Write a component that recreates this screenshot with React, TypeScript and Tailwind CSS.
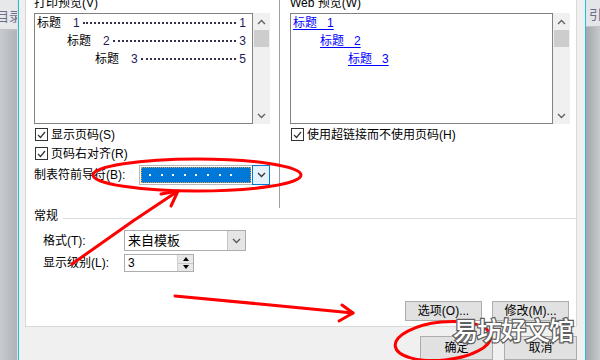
import React from 'react'

const ui = "font-['Liberation_Sans','Noto_Sans_CJK_SC',sans-serif]"

function Chevron({ dir, color = '#606060' }: { dir: 'up' | 'down'; color?: string }) {
  return (
    <svg width="9" height="6" viewBox="0 0 9 6">
      <polyline
        points={dir === 'up' ? '1,5 4.5,1.5 8,5' : '1,1 4.5,4.5 8,1'}
        fill="none"
        stroke={color}
        strokeWidth="1.3"
      />
    </svg>
  )
}

function ScrollBar() {
  return (
    <div className="w-[17px] h-full bg-[#f0f0f0] flex flex-col">
      <div className="h-[17px] flex items-center justify-center">
        <Chevron dir="up" />
      </div>
      <div className="h-[17px] mx-[1px] bg-[#cdcdcd]" />
      <div className="flex-1" />
      <div className="h-[17px] flex items-center justify-center">
        <Chevron dir="down" />
      </div>
    </div>
  )
}

function CheckBox() {
  return (
    <span className="w-[13px] h-[13px] border border-[#333] bg-white flex items-center justify-center shrink-0">
      <svg width="9" height="8" viewBox="0 0 9 8">
        <polyline points="1,4 3.5,6.5 8,1" fill="none" stroke="#333" strokeWidth="1.2" />
      </svg>
    </span>
  )
}

function CheckRow({ label }: { label: string }) {
  return (
    <div className="flex items-center h-[19px]">
      <span className="ml-[1px]">
        <CheckBox />
      </span>
      <span className="ml-[3px] whitespace-nowrap">{label}</span>
    </div>
  )
}

function TocRow({ indent, n, page }: { indent: string; n: string; page: string }) {
  return (
    <div className={`flex items-center h-[18px] pr-[6px] ${indent}`}>
      <span>标题</span>
      <span className="ml-[12px] text-[#1c1c58]">{n}</span>
      <span className="flex-1 mx-[3px] border-b-2 border-dotted border-[#3a2f48]" />
      <span className="text-[#1c1c58]">{page}</span>
    </div>
  )
}

function WebRow({ indent, n }: { indent: string; n: string }) {
  return (
    <div className={`flex items-center h-[18px] ${indent}`}>
      <span className="text-[#0000ff] underline underline-offset-2 whitespace-pre">{`标题   ${n}`}</span>
    </div>
  )
}

function Button({ children, w }: { children: React.ReactNode; w: string }) {
  return (
    <div className={`${w} h-full bg-[#e1e1e1] border border-[#adadad] flex items-center justify-center whitespace-nowrap`}>
      {children}
    </div>
  )
}

export default function App() {
  return (
    <div className={`relative w-[600px] h-[360px] overflow-hidden flex bg-[#f0f0f0] text-[12px] text-black ${ui}`}>
      {/* left neighbouring pane */}
      <div className="w-[18px] h-full flex flex-col bg-gradient-to-r from-[#c8ccd1] to-[#afb3b8] border-r border-[#dfe2e5] overflow-hidden">
        <div className="h-[30px] bg-[#e7e8ea] border-b border-[#c0c2c6] flex items-center pt-[4px]">
          <span className="-ml-[4px] whitespace-nowrap text-[13px] text-[#6c6c8c]">目录</span>
        </div>
      </div>
      <div className="w-px h-full bg-[#1cc2d2]" />

      {/* dialog */}
      <div className="w-[566px] h-full flex flex-col">
        <div className="h-[329px] ml-[6px] mr-[8px] bg-white border-x border-b border-[#d9d9d9] flex flex-col overflow-hidden">
          <div className="h-[208px] flex">
            {/* print preview */}
            <div className="w-[253px] pl-[8px] flex flex-col">
              <div className="h-[13px] overflow-hidden">
                <div className="leading-[12px] -mt-[3px] whitespace-nowrap">打印预览(V)</div>
              </div>
              <div className="flex h-[111px] w-[236px]">
                <div className="w-[219px] h-full border border-[#828282] bg-white leading-[18px]">
                  <TocRow indent="pl-[2px]" n="1" page="1" />
                  <TocRow indent="pl-[32px]" n="2" page="3" />
                  <TocRow indent="pl-[60px]" n="3" page="5" />
                </div>
                <ScrollBar />
              </div>
              <div className="mt-[1px]">
                <CheckRow label="显示页码(S)" />
                <CheckRow label="页码右对齐(R)" />
              </div>
              <div className="mt-[2px] h-[20px] flex items-center">
                <span className="w-[105px] whitespace-nowrap">制表符前导符(B):</span>
                <div className="w-[131px] h-[20px] flex">
                  <div className="flex-1 border border-[#b8b8b8] border-r-0 p-[1px]">
                    <div className="w-full h-full bg-[#0078d7] border border-dotted border-[#d89a50] flex items-center pl-[7px] gap-[9.6px]">
                      {Array.from({ length: 8 }).map((_, i) => (
                        <span key={i} className="w-[2px] h-[2px] bg-white" />
                      ))}
                    </div>
                  </div>
                  <div className="w-[18px] h-full border border-[#0078d7] bg-[#e5f1fb] flex items-center justify-center">
                    <Chevron dir="down" color="#333" />
                  </div>
                </div>
              </div>
            </div>

            {/* web preview */}
            <div className="flex-1 border-l border-[#a0a0a0] pl-[10px] pr-[6px] flex flex-col">
              <div className="h-[13px] overflow-hidden">
                <div className="leading-[12px] -mt-[3px] whitespace-nowrap">Web 预览(W)</div>
              </div>
              <div className="flex h-[111px]">
                <div className="flex-1 h-full border border-[#828282] bg-white leading-[18px]">
                  <WebRow indent="pl-[2px]" n="1" />
                  <WebRow indent="pl-[29px]" n="2" />
                  <WebRow indent="pl-[57px]" n="3" />
                </div>
                <ScrollBar />
              </div>
              <div className="mt-[1px]">
                <CheckRow label="使用超链接而不使用页码(H)" />
              </div>
            </div>
          </div>

          {/* general */}
          <div className="h-[16px] flex items-center pl-[8px]">
            <span>常规</span>
            <div className="flex-1 h-px bg-[#dcdcdc] ml-[5px] mt-[4px]" />
          </div>
          <div className="mt-[6px] h-[21px] flex items-center pl-[17px]">
            <span className="w-[81px] whitespace-nowrap">格式(T):</span>
            <div className="w-[122px] h-full border border-[#adadad] flex">
              <div className="flex-1 pl-[3px] text-[13px] leading-[19px]">来自模板</div>
              <div className="w-[18px] h-full bg-[#e5e5e5] border-l border-[#c4c4c4] flex items-center justify-center">
                <Chevron dir="down" color="#555" />
              </div>
            </div>
          </div>
          <div className="mt-[3px] h-[18px] flex items-center pl-[17px]">
            <span className="w-[81px] whitespace-nowrap">显示级别(L):</span>
            <div className="w-[70px] h-full border border-[#adadad] flex">
              <div className="flex-1 pl-[3px] leading-[16px]">3</div>
              <div className="w-[16px] h-full flex flex-col border-l border-[#d0d0d0]">
                <div className="flex-1 bg-[#e8e8e8] border-b border-[#c8c8c8] flex items-center justify-center">
                  <span className="w-0 h-0 border-x-[3.5px] border-x-transparent border-b-[4px] border-b-black" />
                </div>
                <div className="flex-1 bg-[#e8e8e8] flex items-center justify-center">
                  <span className="w-0 h-0 border-x-[3.5px] border-x-transparent border-t-[4px] border-t-black" />
                </div>
              </div>
            </div>
          </div>
          <div className="mt-[29px] h-[20px] flex justify-end gap-[10px] pr-[7px]">
            <Button w="w-[77px]">选项(O)...</Button>
            <Button w="w-[77px]">修改(M)...</Button>
          </div>
        </div>

        <div className="mt-[9px] h-[24px] flex justify-end gap-[11px] pr-[8px]">
          <Button w="w-[73px]">确定</Button>
          <Button w="w-[73px]">取消</Button>
        </div>
      </div>

      {/* right neighbouring pane */}
      <div className="w-px h-full bg-[#1cc2d2]" />
      <div className="w-[14px] h-full flex flex-col bg-gradient-to-r from-[#a3a7ac] to-[#c6cacd] overflow-hidden">
        <div className="h-[27px] bg-[#e4e5e8] border-b border-[#c0c2c6] flex items-center pt-[4px]">
          <span className="ml-[3px] whitespace-nowrap text-[13px] text-[#6c6c8c]">引</span>
        </div>
      </div>

      {/* red annotations */}
      <svg className="absolute inset-0 pointer-events-none" width="600" height="360" viewBox="0 0 600 360">
        <g fill="none" stroke="#ff0000" strokeWidth="3" strokeLinecap="round" strokeLinejoin="round">
          <ellipse cx="197" cy="175" rx="104" ry="16" />
          <polyline points="72,264 133,221 178,191" />
          <polyline points="161,194 178,191 171,206" />
          <polyline points="175,296 260,304 353,313" />
          <polyline points="342,305 353,313 339,321" />
          <ellipse cx="443" cy="341" rx="48" ry="19" transform="rotate(-6 443 341)" />
        </g>
      </svg>

      {/* watermark */}
      <div className="absolute left-[453px] top-[313px] text-[25px] leading-[32px] tracking-[-1px] font-medium text-white whitespace-nowrap font-['Noto_Sans_CJK_SC',sans-serif] [-webkit-text-stroke:2.5px_#5e5e5e] [paint-order:stroke_fill] pointer-events-none">
        易坊好文馆
      </div>
    </div>
  )
}
